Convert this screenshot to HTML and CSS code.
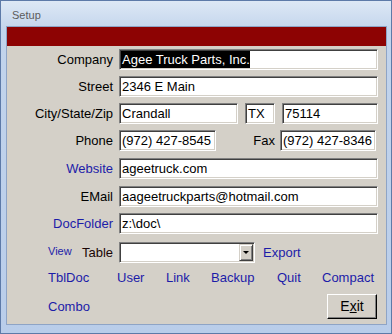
FILE: index.html
```html
<!DOCTYPE html>
<html lang="en">
<head>
  <meta charset="UTF-8">
  <meta name="viewport" content="width=device-width, initial-scale=1.0">
  <title>Setup</title>
  <link rel="stylesheet" href="styles.css">
</head>
<body>
  <div class="window">
    <div class="titlebar">Setup</div>

    <div class="client">
      <div class="banner"></div>

      <div class="form">
        <div class="row">
          <span class="lbl">Company</span>
          <div class="field"><span class="sel">Agee Truck Parts, Inc.</span></div>
        </div>

        <div class="row">
          <span class="lbl">Street</span>
          <div class="field">2346 E Main</div>
        </div>

        <div class="row">
          <span class="lbl">City/State/Zip</span>
          <div class="field city">Crandall</div>
          <div class="field state">TX</div>
          <div class="field zip">75114</div>
        </div>

        <div class="row">
          <span class="lbl">Phone</span>
          <div class="field phone">(972) 427-8545</div>
          <span class="fax-lbl">Fax</span>
          <div class="field fax">(972) 427-8346</div>
        </div>

        <div class="row shift">
          <span class="lbl link">Website</span>
          <div class="field">ageetruck.com</div>
        </div>

        <div class="row shift">
          <span class="lbl">EMail</span>
          <div class="field">aageetruckparts@hotmail.com</div>
        </div>

        <div class="row">
          <span class="lbl link">DocFolder</span>
          <div class="field">z:\doc\</div>
        </div>

        <div class="row view">
          <span class="lbl split"><span class="small link">View</span><span class="table">Table</span></span>
          <div class="combo"><span class="drop"><i class="arrow"></i></span></div>
          <span class="link export">Export</span>
        </div>
      </div>

      <div class="links">
        <span class="link">TblDoc</span>
        <span class="link">User</span>
        <span class="link">Link</span>
        <span class="link">Backup</span>
        <span class="link">Quit</span>
        <span class="link">Compact</span>
      </div>

      <div class="foot">
        <span class="link">Combo</span>
        <div class="btn">E<u>x</u>it</div>
      </div>
    </div>
  </div>
</body>
</html>
```

FILE: styles.css
```css
* {
  box-sizing: border-box;
  margin: 0;
  padding: 0;
}

html, body {
  width: 392px;
  height: 334px;
  overflow: hidden;
}

body {
  font-family: 'Liberation Sans', Arial, sans-serif;
  font-size: 13px;
  color: #000;
}

.window {
  height: 334px;
  display: flex;
  flex-direction: column;
  border: 1px solid #5d7aa8;
  background: linear-gradient(#dde8f5, #c2d4ec 30px, #b9cdea);
  padding: 0 4px 8px 5px;
}

.titlebar {
  height: 25px;
  padding: 8px 0 0 6px;
  font-size: 11px;
  line-height: 13px;
  color: #5c5c5c;
}

.client {
  flex: 1;
  border: 1px solid #8ea4c6;
  background: #d4d0c8;
}

.banner {
  height: 19px;
  background: #8d0303;
}

.form {
  display: flex;
  flex-direction: column;
  gap: 6px;
  padding: 3px 8px 0 0;
}

.row {
  display: flex;
  align-items: center;
  height: 21px;
}

.row.shift {
  margin-top: 1px;
}

.lbl {
  width: 106px;
  margin-right: 6px;
  text-align: right;
  white-space: nowrap;
}

.link {
  color: #1c1ca8;
}

.field {
  flex: 1;
  height: 21px;
  background: #fff;
  border: 1px solid;
  border-color: #808080 #fff #fff #808080;
  box-shadow: inset 1px 1px #404040, inset -1px -1px #d4d0c8;
  padding: 1px 0 0 2px;
  line-height: 17px;
  white-space: nowrap;
  overflow: hidden;
}

.sel {
  display: inline-block;
  margin-left: -1px;
  padding-left: 1px;
  background: #000;
  color: #fff;
}

.field.city {
  flex: none;
  width: 119px;
}

.field.state {
  flex: none;
  width: 30px;
  margin-left: 7px;
}

.field.zip {
  flex: none;
  width: 96px;
  margin-left: 7px;
}

.field.phone {
  flex: none;
  width: 97px;
}

.fax-lbl {
  margin-left: auto;
  margin-right: 5px;
}

.field.fax {
  flex: none;
  width: 96px;
  margin-right: 2px;
}

.row.view {
  margin-top: 2px;
}

.lbl.split {
  display: flex;
  justify-content: space-between;
  align-items: center;
  padding-left: 41px;
  text-align: left;
}

.small {
  font-size: 11px;
  margin-bottom: 3px;
}

.table {
  color: #1a0606;
}

.combo {
  width: 136px;
  height: 21px;
  display: flex;
  justify-content: flex-end;
  background: #fff;
  border: 1px solid;
  border-color: #808080 #fff #fff #808080;
  box-shadow: inset 1px 1px #404040, inset -1px -1px #d4d0c8;
  padding: 1px 1px 1px 0;
}

.drop {
  width: 14px;
  display: flex;
  align-items: center;
  justify-content: center;
  background: #d4d0c8;
  border: 1px solid;
  border-color: #d4d0c8 #404040 #404040 #d4d0c8;
  box-shadow: inset 1px 1px #fff, inset -1px -1px #808080;
}

.arrow {
  width: 0;
  height: 0;
  border-left: 3px solid transparent;
  border-right: 3px solid transparent;
  border-top: 3px solid #000;
}

.export {
  margin-left: 8px;
}

.links {
  display: grid;
  grid-template-columns: 69px 49px 45px 66px 45px auto;
  margin-top: 7px;
  padding-left: 41px;
  line-height: 15px;
}

.foot {
  display: flex;
  justify-content: space-between;
  align-items: center;
  margin-top: 9px;
  padding: 0 9px 0 41px;
}

.btn {
  width: 50px;
  height: 25px;
  background: #d4d0c8;
  border: 1px solid;
  border-color: #fff #000 #000 #fff;
  box-shadow: inset -1px -1px #808080;
  font-size: 14px;
  line-height: 22px;
  text-align: center;
}
```
